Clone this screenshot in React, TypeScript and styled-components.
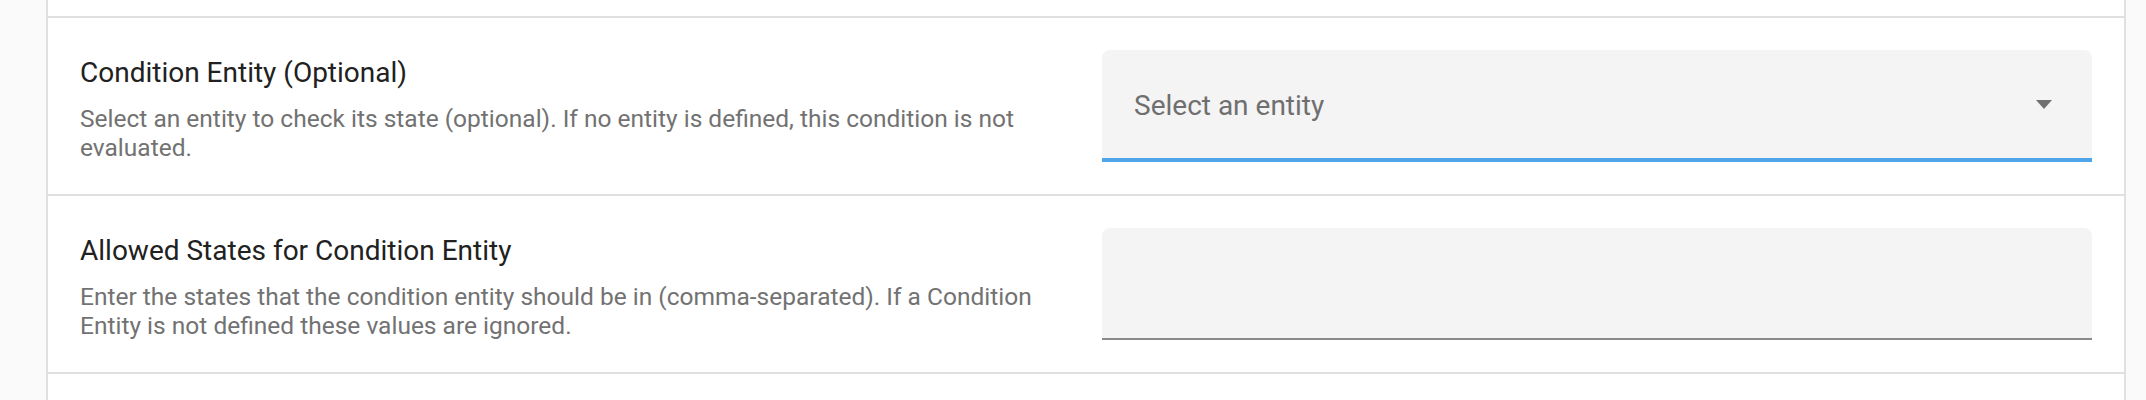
import React from "react";
import styled, { createGlobalStyle } from "styled-components";

const Global = createGlobalStyle`
  html, body { margin: 0; padding: 0; background: #fafafa; }
  body { font-family: Roboto, "Noto Sans", Arial, sans-serif; }
`;

const Page = styled.div`
  padding: 0 20px 0 46px;
  height: 400px;
  overflow: hidden;
`;

const Card = styled.div`
  background: #ffffff;
  border-left: 2px solid #e0e0e0;
  border-right: 2px solid #e0e0e0;
  min-height: 400px;
`;

const Row = styled.div<{ $partial?: boolean }>`
  display: grid;
  grid-template-columns: 1fr 1fr;
  column-gap: 32px;
  align-items: center;
  padding: ${(p) => (p.$partial ? "0 32px" : "32px")};
  height: ${(p) => (p.$partial ? "16px" : "112px")};
  border-bottom: 2px solid #e0e0e0;
  box-sizing: content-box;
`;

const TextBlock = styled.div`
  display: flex;
  flex-direction: column;
  gap: 13px;
  padding-top: 4px;
`;

const Title = styled.div`
  font-size: 28px;
  line-height: 36px;
  color: #212121;
`;

const Desc = styled.div`
  font-size: 24.5px;
  line-height: 29px;
  color: #727272;
`;

const Field = styled.div<{ $focused?: boolean }>`
  height: ${(p) => (p.$focused ? "108px" : "110px")};
  background: #f4f4f4;
  border-radius: 8px 8px 0 0;
  border-bottom: ${(p) => (p.$focused ? "4px solid #4fa5ea" : "2px solid #8a8a8a")};
  display: flex;
  align-items: center;
  padding: 0 40px 0 32px;
`;

const Placeholder = styled.span`
  flex: 1;
  font-size: 28px;
  color: #6f6f6f;
  margin-top: 2px;
`;

const Arrow = styled.svg`
  width: 16px;
  height: 9px;
  flex: none;
`;

export default function App() {
  return (
    <>
      <Global />
      <Page>
        <Card>
          <Row $partial />
          <Row>
            <TextBlock>
              <Title>Condition Entity (Optional)</Title>
              <Desc>
                Select an entity to check its state (optional). If no entity is defined, this condition is not
                evaluated.
              </Desc>
            </TextBlock>
            <Field $focused>
              <Placeholder>Select an entity</Placeholder>
              <Arrow viewBox="0 0 16 9">
                <path d="M0 0 L16 0 L8 9 Z" fill="#707070" />
              </Arrow>
            </Field>
          </Row>
          <Row>
            <TextBlock>
              <Title>Allowed States for Condition Entity</Title>
              <Desc>
                Enter the states that the condition entity should be in (comma-separated). If a Condition
                Entity is not defined these values are ignored.
              </Desc>
            </TextBlock>
            <Field />
          </Row>
        </Card>
      </Page>
    </>
  );
}
